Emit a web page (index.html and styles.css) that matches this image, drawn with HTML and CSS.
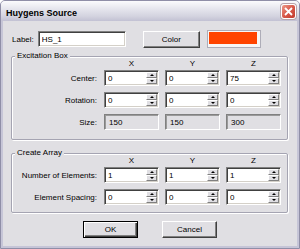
FILE: index.html
```html
<!DOCTYPE html>
<html lang="en">
<head>
  <meta charset="UTF-8">
  <title>Huygens Source</title>
  <link rel="stylesheet" href="styles.css">
</head>
<body>

<div class="window">
  <div class="titlebar">
    <span class="title">Huygens Source</span>
    <button class="close">
      <svg width="9" height="9" viewBox="0 0 9 9"><path d="M1 1 L8 8 M8 1 L1 8" stroke="#fff" stroke-width="1.8" fill="none"/></svg>
    </button>
  </div>

  <div class="client">
    <div class="top-row">
      <label>Label:</label>
      <div class="field name-field"><input type="text" value="HS_1"></div>
      <button class="btn color-btn">Color</button>
      <div class="swatch"><div class="swatch-fill"></div></div>
    </div>

    <fieldset class="group">
      <legend>Excitation Box</legend>
      <div class="axis"><span></span><span>X</span><span>Y</span><span>Z</span></div>
      <div class="rows">
        <label>Center:</label>
        <div class="field spin"><input type="text" value="0"><i class="arrows"><b class="up"></b><b class="down"></b></i></div>
        <div class="field spin"><input type="text" value="0"><i class="arrows"><b class="up"></b><b class="down"></b></i></div>
        <div class="field spin"><input type="text" value="75"><i class="arrows"><b class="up"></b><b class="down"></b></i></div>

        <label>Rotation:</label>
        <div class="field spin"><input type="text" value="0"><i class="arrows"><b class="up"></b><b class="down"></b></i></div>
        <div class="field spin"><input type="text" value="0"><i class="arrows"><b class="up"></b><b class="down"></b></i></div>
        <div class="field spin"><input type="text" value="0"><i class="arrows"><b class="up"></b><b class="down"></b></i></div>

        <label>Size:</label>
        <div class="field ro">150</div>
        <div class="field ro">150</div>
        <div class="field ro">300</div>
      </div>
    </fieldset>

    <fieldset class="group array">
      <legend>Create Array</legend>
      <div class="axis"><span></span><span>X</span><span>Y</span><span>Z</span></div>
      <div class="rows">
        <label>Number of Elements:</label>
        <div class="field spin"><input type="text" value="1"><i class="arrows"><b class="up"></b><b class="down"></b></i></div>
        <div class="field spin"><input type="text" value="1"><i class="arrows"><b class="up"></b><b class="down"></b></i></div>
        <div class="field spin"><input type="text" value="1"><i class="arrows"><b class="up"></b><b class="down"></b></i></div>

        <label>Element Spacing:</label>
        <div class="field spin"><input type="text" value="0"><i class="arrows"><b class="up"></b><b class="down"></b></i></div>
        <div class="field spin"><input type="text" value="0"><i class="arrows"><b class="up"></b><b class="down"></b></i></div>
        <div class="field spin"><input type="text" value="0"><i class="arrows"><b class="up"></b><b class="down"></b></i></div>
      </div>
    </fieldset>

    <div class="actions">
      <button class="btn default">OK</button>
      <button class="btn">Cancel</button>
    </div>
  </div>
</div>

</body>
</html>
```

FILE: styles.css
```css
* { box-sizing: border-box; }
body { margin: 0; font-family: "Liberation Sans", Arial, sans-serif; font-size: 8px; color: #000; background: #fff; }

.window { width: 300px; height: 249px; display: flex; flex-direction: column; background: #c6c5d7; border: 1px solid #8f8ea7; border-radius: 5px 5px 0 0; overflow: hidden; }

.titlebar { height: 20px; flex: none; display: flex; align-items: center; justify-content: space-between; padding: 1px 3px 0 5px; background: linear-gradient(#fbfbfd, #e8e8ef 35%, #d4d4e0 75%, #c2c1d3); }
.title { font-size: 9px; font-weight: bold; padding-top: 2px; }
.close { width: 15px; height: 15px; padding: 0; border: 1px solid #fff; border-radius: 3px; background: linear-gradient(135deg, #ee9a88, #d8594a 50%, #c23a2c); box-shadow: 0 0 0 1px #b9a3a8; display: flex; align-items: center; justify-content: center; }

.client { flex: 1; margin: 0 2px 2px; background: #e0dfe3; padding: 9px 9px 0 8px; display: flex; flex-direction: column; }

.top-row { display: flex; align-items: center; height: 18px; padding-left: 1px; }
.top-row label { margin-right: 4px; }
.name-field { width: 88px; }
.color-btn { width: 57px; height: 18px; margin-left: 17px; }
.swatch { width: 54px; height: 18px; margin-left: 7px; border: 1px solid #aeadb8; background: #f7f7f7; padding: 1px 3px 3px 1px; }
.swatch-fill { width: 100%; height: 100%; background: #ff4400; }

.field { height: 16px; display: flex; align-items: center; background: #fff; border: 1px solid; border-color: #808080 #fff #fff #808080; box-shadow: inset 1px 1px #404040, inset -1px -1px #d4d0c8; padding: 1px; }
.field input { flex: 1; min-width: 0; height: 100%; border: 0; padding: 0 0 0 2px; font: inherit; color: #000; background: transparent; outline: none; }
.ro { background: #e0dfe3; padding-left: 4px; box-shadow: inset 1px 1px #9a9a9a; }

.arrows { width: 11px; height: 100%; display: flex; flex-direction: column; }
.arrows b { flex: 1; background: #e0dfe3; border: 1px solid; border-color: #fff #808080 #808080 #fff; display: flex; align-items: center; justify-content: center; }
.arrows b::after { content: ""; border-left: 2px solid transparent; border-right: 2px solid transparent; }
.arrows .up::after { border-bottom: 2px solid #000; }
.arrows .down::after { border-top: 2px solid #000; }

.group { margin: 3px 0 0; padding: 0 0 9px; min-width: 0; border: 1px solid #a5a4b2; border-radius: 2px; box-shadow: 1px 1px 0 #fff, inset 1px 1px 0 #fff; }
.group legend { margin-left: 3px; padding: 0 2px; line-height: 10px; background: #e0dfe3; }
.array { margin-top: 8px; padding-bottom: 7px; }

.axis, .rows { display: grid; grid-template-columns: 86px 55px 55px 55px; column-gap: 6px; }
.axis { margin-top: -1px; line-height: 8px; text-align: center; }
.rows { row-gap: 6px; margin-top: 2px; }
.rows label { text-align: right; padding-right: 1px; align-self: center; }

.btn { height: 17px; padding: 0; font: inherit; color: #000; background: #e0dfe3; border: 1px solid; border-color: #fff #404040 #404040 #fff; box-shadow: inset -1px -1px #808080; }
.btn.default { border-color: #000; box-shadow: inset 1px 1px #fff, inset -1px -1px #404040, inset -2px -2px #808080; }
.actions { display: flex; justify-content: center; gap: 24px; margin-top: 8px; padding-left: 1px; }
.actions .btn { width: 55px; }
```
